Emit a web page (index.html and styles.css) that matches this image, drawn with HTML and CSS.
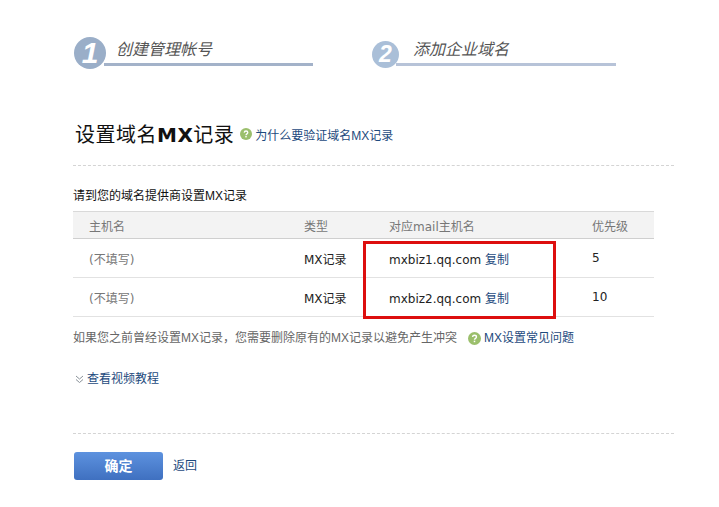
FILE: index.html
```html
<!DOCTYPE html>
<html lang="zh">
<head>
<meta charset="utf-8">
<title>设置域名MX记录</title>
<link rel="stylesheet" href="styles.css">
</head>
<body>
<div class="page">
  <div class="steps">
    <div class="step step-one">
      <span class="num">1</span>
      <span class="step-title">创建管理帐号</span>
    </div>
    <div class="step step-two">
      <span class="num">2</span>
      <span class="step-title">添加企业域名</span>
    </div>
  </div>

  <div class="heading">
    <h1>设置域名<b>MX</b>记录</h1>
    <svg class="help" viewBox="0 0 12 12"><circle cx="6" cy="6" r="6" fill="#9bbf6c"/><path d="M4.2 4.6C4.3 3.5 5 3 6 3s1.8.6 1.8 1.5c0 1.4-1.8 1.3-1.8 2.7" fill="none" stroke="#fff" stroke-width="1.3"/><rect x="5.3" y="8" width="1.4" height="1.4" fill="#fff"/></svg>
    <a class="link" href="#">为什么要验证域名MX记录</a>
  </div>

  <p class="intro">请到您的域名提供商设置MX记录</p>

  <div class="table-wrap">
    <table>
      <thead>
        <tr><th class="c1">主机名</th><th class="c2">类型</th><th class="c3">对应mail主机名</th><th class="c4">优先级</th></tr>
      </thead>
      <tbody>
        <tr><td class="muted">(不填写)</td><td>MX记录</td><td>mxbiz1.qq.com <a class="link" href="#">复制</a></td><td>5</td></tr>
        <tr><td class="muted">(不填写)</td><td>MX记录</td><td>mxbiz2.qq.com <a class="link" href="#">复制</a></td><td>10</td></tr>
      </tbody>
    </table>
    <div class="highlight"></div>
  </div>

  <p class="note">
    <span>如果您之前曾经设置MX记录，您需要删除原有的MX记录以避免产生冲突</span>
    <svg class="help" viewBox="0 0 12 12"><circle cx="6" cy="6" r="6" fill="#9bbf6c"/><path d="M4.2 4.6C4.3 3.5 5 3 6 3s1.8.6 1.8 1.5c0 1.4-1.8 1.3-1.8 2.7" fill="none" stroke="#fff" stroke-width="1.3"/><rect x="5.3" y="8" width="1.4" height="1.4" fill="#fff"/></svg>
    <a class="link" href="#">MX设置常见问题</a>
  </p>

  <p class="video">
    <svg class="chev" viewBox="0 0 9 9"><path d="M1 1l3.5 3L8 1M1 4.5l3.5 3 3.5-3" fill="none" stroke="#8a9299" stroke-width="1"/></svg>
    <a class="link" href="#">查看视频教程</a>
  </p>

  <div class="actions">
    <button class="confirm" type="button">确定</button>
    <a class="link back" href="#">返回</a>
  </div>
</div>
</body>
</html>
```

FILE: styles.css
```css
* { box-sizing: border-box; }
html, body { margin: 0; padding: 0; background: #fff; }
body {
  font-family: "Liberation Sans", "Noto Sans CJK SC", sans-serif;
  font-size: 12px;
  color: #222;
}
.page { width: 719px; height: 507px; padding: 36px 45px 0 73px; overflow: hidden; }
.link { color: #1d4a7d; text-decoration: none; }

.steps { display: flex; height: 33px; }
.step { display: flex; align-items: flex-end; }
.step-one { width: 240px; margin-right: 57px; }
.step-two { width: 246px; }
.num {
  flex: none;
  position: relative;
  z-index: 1;
  border-radius: 50%;
  color: #fff;
  font-style: italic;
  font-weight: bold;
  text-align: center;
}
.step-one .num { margin: 0 0 0 1px; width: 32px; height: 32px; line-height: 32px; font-size: 30px; background: #9aaec8; }
.step-two .num { margin: 0 0 1px 2px; width: 27px; height: 27px; line-height: 27px; font-size: 23px; background: #aabfd8; }
.step-title {
  flex: 1;
  font-size: 16px;
  font-style: italic;
  color: #555;
  line-height: 20px;
  margin-bottom: 3px;
  padding-bottom: 3px;
  border-bottom: 3px solid #a3b2c9;
}
.step-one .step-title { margin-left: -2px; padding-left: 12px; }
.step-two .step-title { margin-left: -3px; padding-left: 17px; border-bottom-color: #b7c3d8; }

.heading {
  display: flex;
  align-items: center;
  margin: 50px 0 0;
  height: 47px;
  padding-bottom: 16px;
  border-bottom: 1px dashed #d4d4d4;
}
h1 { margin: 0 6px 0 2px; font-size: 20px; font-weight: normal; color: #111; letter-spacing: .5px; font-family: "Noto Sans CJK SC", sans-serif; line-height: 28px; }
h1 b { font-family: "DejaVu Sans", sans-serif; font-weight: bold; }
.help { width: 12px; height: 12px; flex: none; margin-right: 3px; }
.intro { margin: 21px 0 0; line-height: 18px; color: #111; }

.table-wrap { position: relative; margin-top: 6px; width: 581px; }
table { width: 581px; border-collapse: collapse; table-layout: fixed; font-family: "DejaVu Sans", "Noto Sans CJK SC", sans-serif; }
th {
  height: 27px;
  background: #f3f3f3;
  border-top: 1px solid #d9d9d9;
  border-bottom: 1px solid #cfcfcf;
  font-weight: normal;
  text-align: left;
  color: #777;
  padding: 0 0 0 16px;
}
th.c1 { width: 215px; }
th.c2 { width: 85px; }
th.c3 { width: 203px; }
td { height: 39px; padding: 0 0 0 16px; border-bottom: 1px solid #e2e2e2; color: #222; }
td.muted { color: #777; }
.highlight {
  position: absolute;
  left: 290px;
  top: 30px;
  width: 193px;
  height: 78px;
  border: 3px solid #dd0f0f;
}

.note { margin: 12px 0 0; display: flex; align-items: center; line-height: 18px; color: #666; }
.note .help { margin-left: 11px; margin-right: 3px; width: 13px; height: 13px; }
.video { margin: 23px 0 0; display: flex; align-items: center; line-height: 18px; }
.chev { width: 9px; height: 9px; margin: 0 3px 0 2px; }

.actions {
  margin-top: 45px;
  padding-top: 18px;
  border-top: 1px dashed #d4d4d4;
  display: flex;
  align-items: center;
  gap: 10px;
}
.confirm {
  width: 89px;
  height: 28px;
  margin: 0 0 0 1px;
  padding: 0 0 2px;
  border: 0;
  border-radius: 3px;
  background: linear-gradient(#5d92df, #3f70c0);
  color: #fff;
  font: bold 14px "Noto Sans CJK SC", sans-serif;
}
.back { margin-bottom: 3px; }
```
